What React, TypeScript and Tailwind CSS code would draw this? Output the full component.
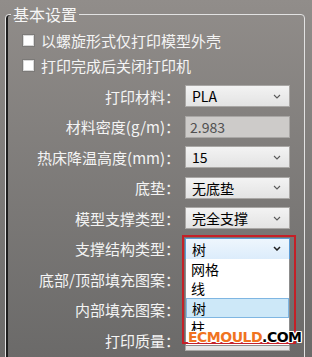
import React from 'react'

const FONT = "font-['Noto_Sans_CJK_SC','Microsoft_YaHei',sans-serif]"

// ── Petit chevron des listes déroulantes ─────────────────────────────────────
function Chevron({ dark }: { dark?: boolean }) {
  return (
    <svg width="8" height="5" viewBox="0 0 8 5" className="shrink-0">
      <polyline
        points="1,1 4,4 7,1"
        fill="none"
        stroke={dark ? '#202020' : '#5a5a5a'}
        strokeWidth={dark ? 1.5 : 1.1}
      />
    </svg>
  )
}

function Select({ value, active }: { value: string; active?: boolean }) {
  return (
    <div
      className={`w-[105px] h-[22px] flex items-center justify-between pl-[6px] pr-[8px] border text-[14px] leading-none text-black ${
        active
          ? 'border-[#5b9bd5] bg-gradient-to-b from-[#eef6fd] to-[#dcecfb]'
          : 'border-[#a9a7a5] bg-gradient-to-b from-[#f3f3f3] to-[#e3e3e3]'
      }`}
    >
      <span>{value}</span>
      <Chevron dark={active} />
    </div>
  )
}

function Field({ value }: { value: string }) {
  return (
    <div className="w-[105px] h-[22px] flex items-center pl-[4px] border border-[#a9a7a5] bg-[#cdcbc9] text-[14px] leading-none text-[#505050]">
      {value}
    </div>
  )
}

function Check({ label }: { label: string }) {
  return (
    <div className="h-[25px] flex items-center pl-[17px] gap-[7px]">
      <span className="w-[11px] h-[11px] bg-white border border-[#d8d8d8] shadow-[0_0_0_1px_#7c7a78]" />
      <span className="text-[15px] leading-none text-[#f4f4f4]">{label}</span>
    </div>
  )
}

// les trois dernières listes sont masquées par le menu ouvert : valeur vide
const ROWS: { label: string; kind: 'select' | 'field'; value: string; active?: boolean }[] = [
  { label: '打印材料：', kind: 'select', value: 'PLA' },
  { label: '材料密度(g/m)：', kind: 'field', value: '2.983' },
  { label: '热床降温高度(mm)：', kind: 'select', value: '15' },
  { label: '底垫：', kind: 'select', value: '无底垫' },
  { label: '模型支撑类型：', kind: 'select', value: '完全支撑' },
  { label: '支撑结构类型：', kind: 'select', value: '树', active: true },
  { label: '底部/顶部填充图案：', kind: 'select', value: '' },
  { label: '内部填充图案：', kind: 'select', value: '' },
  { label: '打印质量：', kind: 'select', value: '' },
]

const OPTIONS = ['网格', '线', '树', '柱']

export default function App() {
  return (
    <div className={`relative w-[312px] h-[357px] overflow-hidden bg-gradient-to-b from-[#918d8a] to-[#6b6a69] ${FONT}`}>
      <fieldset className="ml-[5px] mr-[7px] mt-[5px] h-[400px] border border-[#e2e2e2] rounded-t-[4px] shadow-[inset_2px_0_0_#1e1e1e]">
        <legend className="ml-[5px] px-[2px] text-[16px] leading-[18px] text-[#f6f6f6]">基本设置</legend>

        <div className="pt-[5px]">
          <Check label="以螺旋形式仅打印模型外壳" />
          <Check label="打印完成后关闭打印机" />
        </div>

        <div className="mt-[7px] flex flex-col gap-[8.5px]">
          {ROWS.map(r => (
            <div key={r.label} className="flex items-center gap-[5px]">
              <span className="w-[174px] text-right text-[15px] leading-none text-[#f4f4f4] whitespace-nowrap">
                {r.label}
              </span>
              {r.kind === 'select' ? <Select value={r.value} active={r.active} /> : <Field value={r.value} />}
            </div>
          ))}
        </div>
      </fieldset>

      {/* Liste ouverte du « 支撑结构类型 » */}
      <div className="absolute left-[185px] top-[259px] w-[105px] h-[87px] bg-white border border-[#8c8c8c] border-t-0">
        {OPTIONS.map(o => (
          <div
            key={o}
            className={`h-[19.5px] flex items-center pl-[5px] text-[14px] leading-none text-black ${
              o === '树' ? 'bg-[#cde8f8] border border-[#7fb6e2] pl-[4px]' : ''
            }`}
          >
            {o}
          </div>
        ))}
      </div>

      {/* Cadre rouge d'annotation */}
      <div className="absolute left-[182px] top-[235px] w-[114px] h-[109px] border-2 border-[#c42027]" />

      {/* Filigrane */}
      <div className="absolute left-[188px] top-[327px] text-[14px] font-black leading-[20px] tracking-[-0.5px] font-['DejaVu_Sans',sans-serif] [text-shadow:1px_0_0_#fff,-1px_0_0_#fff,0_1px_0_#fff,0_-1px_0_#fff,1px_1px_0_#fff,-1px_-1px_0_#fff,1px_-1px_0_#fff,-1px_1px_0_#fff]">
        <span className="text-[#f07320]">ECMOULD</span>
        <span className="text-black">.COM</span>
      </div>
    </div>
  )
}
